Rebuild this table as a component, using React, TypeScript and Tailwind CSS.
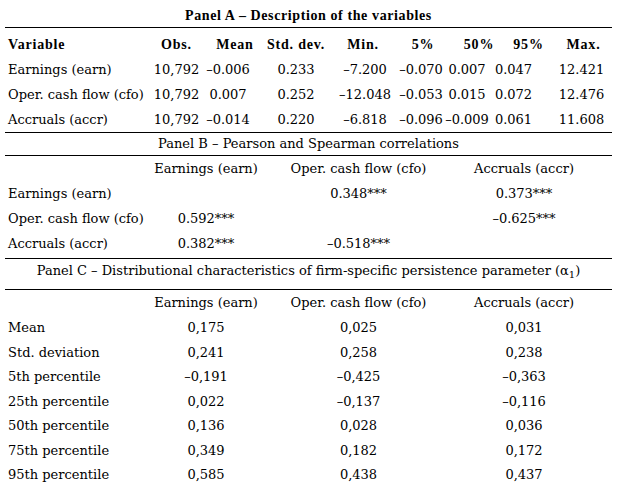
const bold = { fontFamily: '"Liberation Serif", "Times New Roman", serif' };

const panelA = [
  { label: 'Earnings (earn)', v: ['10,792', '–0.006', '0.233', '–7.200', '–0.070', '0.007', '0.047', '12.421'] },
  { label: 'Oper. cash flow (cfo)', v: ['10,792', '0.007', '0.252', '–12.048', '–0.053', '0.015', '0.072', '12.476'] },
  { label: 'Accruals (accr)', v: ['10,792', '–0.014', '0.220', '–6.818', '–0.096', '–0.009', '0.061', '11.608'] },
];

// header text offsets and data offsets, per column (written out so Tailwind sees them)
const headA = [
  { t: 'Obs.', c: '' },
  { t: 'Mean', c: 'pl-[6px]' },
  { t: 'Std. dev.', c: '' },
  { t: 'Min.', c: 'pl-[4px]' },
  { t: '5%', c: 'pl-[10px]' },
  { t: '50%', c: 'pl-[24px]' },
  { t: '95%', c: 'pl-[24px]' },
  { t: 'Max.', c: 'pl-[20px]' },
];
const dataA = ['', 'pr-[8px]', '', 'pl-[8px]', 'pl-[6px]', '', 'pr-[6px]', 'pl-[16px]'];

const panelB = [
  { label: 'Earnings (earn)', v: ['', '0.348***', '0.373***'] },
  { label: 'Oper. cash flow (cfo)', v: ['0.592***', '', '–0.625***'] },
  { label: 'Accruals (accr)', v: ['0.382***', '–0.518***', ''] },
];

const panelC = [
  { label: 'Mean', v: ['0,175', '0,025', '0,031'] },
  { label: 'Std. deviation', v: ['0,241', '0,258', '0,238'] },
  { label: '5th percentile', v: ['–0,191', '–0,425', '–0,363'] },
  { label: '25th percentile', v: ['0,022', '–0,137', '–0,116'] },
  { label: '50th percentile', v: ['0,136', '0,028', '0,036'] },
  { label: '75th percentile', v: ['0,349', '0,182', '0,172'] },
  { label: '95th percentile', v: ['0,585', '0,438', '0,437'] },
];

const colsA = 'grid grid-cols-[146px_51px_60px_68px_62px_52px_46px_53px_61px]';
const colsB = 'grid grid-cols-[146px_110px_195px_136px]';

function Cell({ children, className = '' }: { children?: React.ReactNode; className?: string }) {
  return <div className={`flex items-center justify-center whitespace-nowrap ${className}`}>{children}</div>;
}

export default function App() {
  return (
    <div
      className="h-[494px] w-[617px] overflow-hidden bg-white text-[13px] leading-[16px] text-black"
      style={{ fontFamily: '"DejaVu Serif", serif' }}
    >
      <div className="ml-[5px] w-[607px]">
        {/* Panel A */}
        <div className="flex h-[28px] justify-center border-b border-black pt-[8px]">
          <span className="text-[14px] font-bold tracking-[0.6px]" style={bold}>
            Panel A – Description of the variables
          </span>
        </div>
        <div className="border-b border-black pt-[4px]">
          <div className={`${colsA} h-[25px] text-[14px] font-bold tracking-[0.8px]`} style={bold}>
            <div className="flex items-center pl-[3px]">Variable</div>
            {headA.map((h) => (
              <Cell key={h.t} className={h.c}>
                {h.t}
              </Cell>
            ))}
          </div>
          {panelA.map((r) => (
            <div key={r.label} className={`${colsA} h-[25px]`}>
              <div className="flex items-center whitespace-nowrap pl-[3px]">{r.label}</div>
              {r.v.map((v, i) => (
                <Cell key={i} className={dataA[i]}>
                  {v}
                </Cell>
              ))}
            </div>
          ))}
        </div>

        {/* Panel B */}
        <div className="flex h-[23px] items-center justify-center border-b border-black">
          Panel B – Pearson and Spearman correlations
        </div>
        <div className="border-b border-black pb-[2px]">
          <div className={`${colsB} h-[25px]`}>
            <div />
            <Cell>Earnings (earn)</Cell>
            <Cell>Oper. cash flow (cfo)</Cell>
            <Cell>Accruals (accr)</Cell>
          </div>
          {panelB.map((r) => (
            <div key={r.label} className={`${colsB} h-[25px]`}>
              <div className="flex items-center whitespace-nowrap pl-[3px]">{r.label}</div>
              {r.v.map((v, i) => (
                <Cell key={i}>{v}</Cell>
              ))}
            </div>
          ))}
        </div>

        {/* Panel C */}
        <div className="flex h-[31px] items-start justify-center overflow-hidden border-b border-black pt-[4px]">
          <span className="leading-[16px]">
            Panel C – Distributional characteristics of firm-specific persistence parameter (α
            <sub className="text-[10px] leading-none">1</sub>)
          </span>
        </div>
        <div>
          <div className={`${colsB} h-[26px]`}>
            <div />
            <Cell>Earnings (earn)</Cell>
            <Cell>Oper. cash flow (cfo)</Cell>
            <Cell>Accruals (accr)</Cell>
          </div>
          {panelC.map((r) => (
            <div key={r.label} className={`${colsB} h-[24.5px]`}>
              <div className="flex items-center whitespace-nowrap pl-[3px]">{r.label}</div>
              {r.v.map((v, i) => (
                <Cell key={i}>{v}</Cell>
              ))}
            </div>
          ))}
        </div>
      </div>
    </div>
  );
}
